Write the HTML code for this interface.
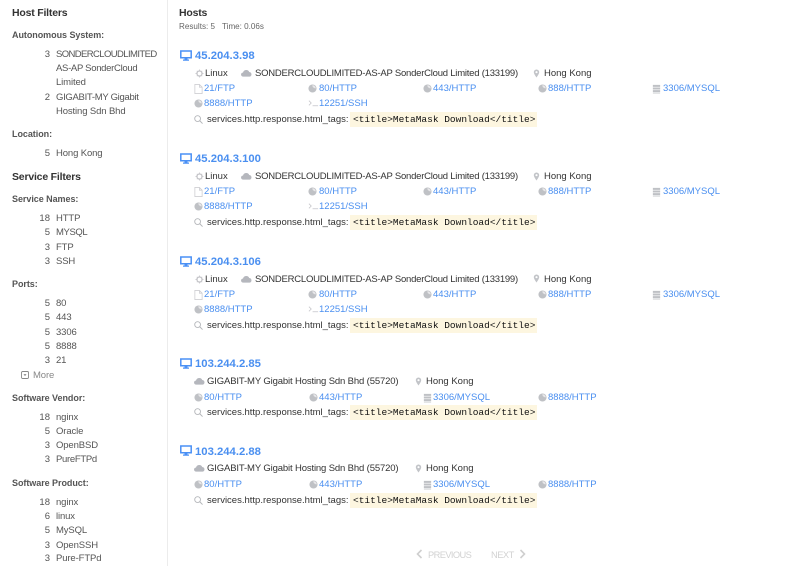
<!DOCTYPE html>
<html><head><meta charset="utf-8">
<style>
html,body{margin:0;padding:0;background:#fff}
#p{position:relative;width:800px;height:566px;overflow:hidden;font-family:"Liberation Sans",sans-serif;background:#fff;filter:blur(.3px)}
#p span,#p svg{position:absolute}
#p span{white-space:nowrap;line-height:14px;height:14px}
.bar{position:absolute;left:167px;top:0;width:1px;height:566px;background:#ececec}
.h{font-size:10.5px;font-weight:bold;color:#333;left:12px;margin-top:1px;letter-spacing:-.2px}
.s{font-size:9px;font-weight:bold;color:#555;left:12px;margin-top:1px;letter-spacing:-.05px}
.c{font-size:9.5px;color:#555;width:20px;left:30px;text-align:right;margin-top:1px}
.n{font-size:9.5px;color:#555;left:56px;margin-top:1px;letter-spacing:-.12px}
.ip{font-size:11.3px;font-weight:bold;color:#4a8ff0;left:195px}
.k{font-size:9.5px;color:#333}
.w{letter-spacing:-.226px}
.g{letter-spacing:-.14px}
.l{font-size:9.5px;color:#4a8ff0}
.m{font-family:"Liberation Mono",monospace;font-size:9.5px;color:#111;background:#fdf6e0;left:350px;width:187px;height:15px!important;line-height:15px!important;padding-left:3px;box-sizing:border-box}
.q{left:207px}
</style></head><body><div id="p">
<svg width="0" height="0" style="position:absolute">
<symbol id="mon" viewBox="0 0 12 11"><path d="M.8 1h10.400v6.800H.8z" fill="none" stroke="#4a90f5" stroke-width="1.500"/><path d="M4.500 8.500h3v1H9v1.200H3V9.500h1.500z" fill="#4a90f5"/></symbol>
<symbol id="gear" viewBox="0 0 10 10"><path d="M5 .5v9M.5 5h9M2 2l6 6M8 2l-6 6" stroke="#d0d0d4" stroke-width="1.100"/><circle cx="5" cy="5" r="2.800" fill="#fff" stroke="#c4c4c8" stroke-width="1.400"/></symbol>
<symbol id="cloud" viewBox="0 0 12 8"><path d="M2.500 8a2.300 2.300 0 0 1-.3-4.600A3.600 3.600 0 0 1 9 2.900 2.600 2.600 0 0 1 9.500 8z" fill="#b5b7bd"/></symbol>
<symbol id="pin" viewBox="0 0 7 10"><path d="M3.500 .5a3 3 0 0 1 3 3c0 2-3 6-3 6s-3-4-3-6a3 3 0 0 1 3-3z" fill="#c2c4c8"/><circle cx="3.500" cy="3.500" r="1.200" fill="#fff"/></symbol>
<symbol id="file" viewBox="0 0 9 11"><path d="M.5.5h5l3 3v7h-8zM5.500.5v3h3" fill="none" stroke="#cfcfd3" stroke-width=".9"/></symbol>
<symbol id="globe" viewBox="0 0 10 10"><circle cx="5" cy="5" r="4.500" fill="#bfc1c5"/><path d="M5 1.200c2 .2 3.500 1.600 3.600 3.500-1 .6-1.800-.4-2.600-.8C5.300 3.400 4.600 2.200 5 1.200z" fill="#e8e8ea"/></symbol>
<symbol id="db" viewBox="0 0 9 11"><path d="M.5 1h8v2.200h-8zM.5 3.900h8v2.200h-8zM.5 6.800h8V9h-8z" fill="#bfc1c5"/><path d="M.5 9.500h8v1h-8z" fill="#cdcfd2"/></symbol>
<symbol id="term" viewBox="0 0 12 8"><path d="M1 1.500 3.500 4 1 6.500" fill="none" stroke="#c8c8cc" stroke-width=".9"/><path d="M5 7h6" stroke="#c8c8cc" stroke-width=".9"/></symbol>
<symbol id="mag" viewBox="0 0 10 10"><circle cx="4" cy="4" r="3.200" fill="none" stroke="#b4b6ba" stroke-width="1"/><path d="M6.400 6.400 9.500 9.500" stroke="#b4b6ba" stroke-width="1.100"/></symbol>
<symbol id="plus" viewBox="0 0 8 8"><rect x=".5" y=".5" width="7" height="7" rx="1.200" fill="none" stroke="#888" stroke-width=".9"/><path d="M2.500 3.200h3L4 5z" fill="#777"/></symbol>
</svg>
<div class="bar"></div>

<span class="h" style="top:5px">Host Filters</span>
<span class="s" style="top:27px">Autonomous System:</span>
<span class="c" style="top:47px">3</span><span class="n" style="top:47px;letter-spacing:-.6px">SONDERCLOUDLIMITED</span>
<span class="n" style="top:61px;letter-spacing:-.3px">AS-AP SonderCloud</span>
<span class="n" style="top:75px">Limited</span>
<span class="c" style="top:90px">2</span><span class="n" style="top:90px;letter-spacing:-.3px">GIGABIT-MY Gigabit</span>
<span class="n" style="top:104px">Hosting Sdn Bhd</span>
<span class="s" style="top:126px">Location:</span>
<span class="c" style="top:146px">5</span><span class="n" style="top:146px">Hong Kong</span>
<span class="h" style="top:169px">Service Filters</span>
<span class="s" style="top:191px">Service Names:</span>
<span class="c" style="top:211px">18</span><span class="n" style="top:211px">HTTP</span>
<span class="c" style="top:225px">5</span><span class="n" style="top:225px;letter-spacing:-.4px">MYSQL</span>
<span class="c" style="top:240px">3</span><span class="n" style="top:240px">FTP</span>
<span class="c" style="top:254px">3</span><span class="n" style="top:254px">SSH</span>
<span class="s" style="top:276px">Ports:</span>
<span class="c" style="top:296px">5</span><span class="n" style="top:296px">80</span>
<span class="c" style="top:310px">5</span><span class="n" style="top:310px">443</span>
<span class="c" style="top:325px">5</span><span class="n" style="top:325px">3306</span>
<span class="c" style="top:339px">5</span><span class="n" style="top:339px">8888</span>
<span class="c" style="top:353px">3</span><span class="n" style="top:353px">21</span>
<svg style="left:21px;top:371px" width="8" height="8"><use href="#plus"/></svg>
<span class="n" style="left:33px;top:368px;color:#888">More</span>
<span class="s" style="top:390px">Software Vendor:</span>
<span class="c" style="top:410px">18</span><span class="n" style="top:410px">nginx</span>
<span class="c" style="top:424px">5</span><span class="n" style="top:424px">Oracle</span>
<span class="c" style="top:438px">3</span><span class="n" style="top:438px">OpenBSD</span>
<span class="c" style="top:452px">3</span><span class="n" style="top:452px;letter-spacing:-.3px">PureFTPd</span>
<span class="s" style="top:475px">Software Product:</span>
<span class="c" style="top:495px">18</span><span class="n" style="top:495px">nginx</span>
<span class="c" style="top:509px">6</span><span class="n" style="top:509px">linux</span>
<span class="c" style="top:523px">5</span><span class="n" style="top:523px">MySQL</span>
<span class="c" style="top:538px">3</span><span class="n" style="top:538px">OpenSSH</span>
<span class="c" style="top:551px">3</span><span class="n" style="top:551px">Pure-FTPd</span>

<span class="h" style="left:179px;top:5px">Hosts</span>
<span style="left:179px;top:20px;font-size:8.1px;color:#666">Results: 5</span>
<span style="left:222px;top:20px;font-size:8.1px;color:#666">Time: 0.06s</span>

<!-- Host 1 -->
<svg style="left:180px;top:50px" width="12" height="11"><use href="#mon"/></svg>
<span class="ip" style="top:49px">45.204.3.98</span>
<svg style="left:195px;top:69px" width="9" height="9"><use href="#gear"/></svg>
<span class="k" style="left:205px;top:67px">Linux</span>
<svg style="left:241px;top:69px" width="11" height="8"><use href="#cloud"/></svg>
<span class="k w" style="left:255px;top:67px">SONDERCLOUDLIMITED-AS-AP SonderCloud Limited (133199)</span>
<svg style="left:533px;top:69px" width="7" height="9"><use href="#pin"/></svg>
<span class="k" style="left:544px;top:67px">Hong Kong</span>
<svg style="left:194px;top:84px" width="9" height="10"><use href="#file"/></svg><span class="l" style="left:204px;top:82px">21/FTP</span>
<svg style="left:308px;top:84px" width="9" height="9"><use href="#globe"/></svg><span class="l" style="left:319px;top:82px">80/HTTP</span>
<svg style="left:423px;top:84px" width="9" height="9"><use href="#globe"/></svg><span class="l" style="left:433px;top:82px">443/HTTP</span>
<svg style="left:538px;top:84px" width="9" height="9"><use href="#globe"/></svg><span class="l" style="left:548px;top:82px">888/HTTP</span>
<svg style="left:652px;top:84px" width="9" height="10"><use href="#db"/></svg><span class="l" style="left:663px;top:82px">3306/MYSQL</span>
<svg style="left:194px;top:99px" width="9" height="9"><use href="#globe"/></svg><span class="l" style="left:204px;top:97px">8888/HTTP</span>
<svg style="left:308px;top:99px" width="11" height="8"><use href="#term"/></svg><span class="l" style="left:319px;top:97px">12251/SSH</span>
<svg style="left:194px;top:115px" width="9" height="9"><use href="#mag"/></svg>
<span class="k q" style="top:113px">services.http.response.html_tags:</span>
<span class="m" style="top:112px">&lt;title&gt;MetaMask Download&lt;/title&gt;</span>

<!-- Host 2 -->
<svg style="left:180px;top:153px" width="12" height="11"><use href="#mon"/></svg>
<span class="ip" style="top:152px">45.204.3.100</span>
<svg style="left:195px;top:172px" width="9" height="9"><use href="#gear"/></svg>
<span class="k" style="left:205px;top:170px">Linux</span>
<svg style="left:241px;top:172px" width="11" height="8"><use href="#cloud"/></svg>
<span class="k w" style="left:255px;top:170px">SONDERCLOUDLIMITED-AS-AP SonderCloud Limited (133199)</span>
<svg style="left:533px;top:172px" width="7" height="9"><use href="#pin"/></svg>
<span class="k" style="left:544px;top:170px">Hong Kong</span>
<svg style="left:194px;top:187px" width="9" height="10"><use href="#file"/></svg><span class="l" style="left:204px;top:185px">21/FTP</span>
<svg style="left:308px;top:187px" width="9" height="9"><use href="#globe"/></svg><span class="l" style="left:319px;top:185px">80/HTTP</span>
<svg style="left:423px;top:187px" width="9" height="9"><use href="#globe"/></svg><span class="l" style="left:433px;top:185px">443/HTTP</span>
<svg style="left:538px;top:187px" width="9" height="9"><use href="#globe"/></svg><span class="l" style="left:548px;top:185px">888/HTTP</span>
<svg style="left:652px;top:187px" width="9" height="10"><use href="#db"/></svg><span class="l" style="left:663px;top:185px">3306/MYSQL</span>
<svg style="left:194px;top:202px" width="9" height="9"><use href="#globe"/></svg><span class="l" style="left:204px;top:200px">8888/HTTP</span>
<svg style="left:308px;top:202px" width="11" height="8"><use href="#term"/></svg><span class="l" style="left:319px;top:200px">12251/SSH</span>
<svg style="left:194px;top:218px" width="9" height="9"><use href="#mag"/></svg>
<span class="k q" style="top:216px">services.http.response.html_tags:</span>
<span class="m" style="top:215px">&lt;title&gt;MetaMask Download&lt;/title&gt;</span>

<!-- Host 3 -->
<svg style="left:180px;top:256px" width="12" height="11"><use href="#mon"/></svg>
<span class="ip" style="top:255px">45.204.3.106</span>
<svg style="left:195px;top:275px" width="9" height="9"><use href="#gear"/></svg>
<span class="k" style="left:205px;top:273px">Linux</span>
<svg style="left:241px;top:275px" width="11" height="8"><use href="#cloud"/></svg>
<span class="k w" style="left:255px;top:273px">SONDERCLOUDLIMITED-AS-AP SonderCloud Limited (133199)</span>
<svg style="left:533px;top:274px" width="7" height="9"><use href="#pin"/></svg>
<span class="k" style="left:544px;top:273px">Hong Kong</span>
<svg style="left:194px;top:290px" width="9" height="10"><use href="#file"/></svg><span class="l" style="left:204px;top:288px">21/FTP</span>
<svg style="left:308px;top:290px" width="9" height="9"><use href="#globe"/></svg><span class="l" style="left:319px;top:288px">80/HTTP</span>
<svg style="left:423px;top:290px" width="9" height="9"><use href="#globe"/></svg><span class="l" style="left:433px;top:288px">443/HTTP</span>
<svg style="left:538px;top:290px" width="9" height="9"><use href="#globe"/></svg><span class="l" style="left:548px;top:288px">888/HTTP</span>
<svg style="left:652px;top:290px" width="9" height="10"><use href="#db"/></svg><span class="l" style="left:663px;top:288px">3306/MYSQL</span>
<svg style="left:194px;top:305px" width="9" height="9"><use href="#globe"/></svg><span class="l" style="left:204px;top:303px">8888/HTTP</span>
<svg style="left:308px;top:305px" width="11" height="8"><use href="#term"/></svg><span class="l" style="left:319px;top:303px">12251/SSH</span>
<svg style="left:194px;top:321px" width="9" height="9"><use href="#mag"/></svg>
<span class="k q" style="top:319px">services.http.response.html_tags:</span>
<span class="m" style="top:318px">&lt;title&gt;MetaMask Download&lt;/title&gt;</span>

<!-- Host 4 -->
<svg style="left:180px;top:358px" width="12" height="11"><use href="#mon"/></svg>
<span class="ip" style="top:357px">103.244.2.85</span>
<svg style="left:194px;top:377px" width="11" height="8"><use href="#cloud"/></svg>
<span class="k g" style="left:207px;top:375px">GIGABIT-MY Gigabit Hosting Sdn Bhd (55720)</span>
<svg style="left:415px;top:377px" width="7" height="9"><use href="#pin"/></svg>
<span class="k" style="left:426px;top:375px">Hong Kong</span>
<svg style="left:194px;top:393px" width="9" height="9"><use href="#globe"/></svg><span class="l" style="left:204px;top:391px">80/HTTP</span>
<svg style="left:309px;top:393px" width="9" height="9"><use href="#globe"/></svg><span class="l" style="left:319px;top:391px">443/HTTP</span>
<svg style="left:423px;top:393px" width="9" height="10"><use href="#db"/></svg><span class="l" style="left:433px;top:391px">3306/MYSQL</span>
<svg style="left:538px;top:393px" width="9" height="9"><use href="#globe"/></svg><span class="l" style="left:548px;top:391px">8888/HTTP</span>
<svg style="left:194px;top:408px" width="9" height="9"><use href="#mag"/></svg>
<span class="k q" style="top:406px">services.http.response.html_tags:</span>
<span class="m" style="top:405px">&lt;title&gt;MetaMask Download&lt;/title&gt;</span>

<!-- Host 5 -->
<svg style="left:180px;top:445px" width="12" height="11"><use href="#mon"/></svg>
<span class="ip" style="top:445px">103.244.2.88</span>
<svg style="left:194px;top:464px" width="11" height="8"><use href="#cloud"/></svg>
<span class="k g" style="left:207px;top:462px">GIGABIT-MY Gigabit Hosting Sdn Bhd (55720)</span>
<svg style="left:415px;top:464px" width="7" height="9"><use href="#pin"/></svg>
<span class="k" style="left:426px;top:462px">Hong Kong</span>
<svg style="left:194px;top:480px" width="9" height="9"><use href="#globe"/></svg><span class="l" style="left:204px;top:478px">80/HTTP</span>
<svg style="left:309px;top:480px" width="9" height="9"><use href="#globe"/></svg><span class="l" style="left:319px;top:478px">443/HTTP</span>
<svg style="left:423px;top:480px" width="9" height="10"><use href="#db"/></svg><span class="l" style="left:433px;top:478px">3306/MYSQL</span>
<svg style="left:538px;top:480px" width="9" height="9"><use href="#globe"/></svg><span class="l" style="left:548px;top:478px">8888/HTTP</span>
<svg style="left:194px;top:496px" width="9" height="9"><use href="#mag"/></svg>
<span class="k q" style="top:494px">services.http.response.html_tags:</span>
<span class="m" style="top:493px">&lt;title&gt;MetaMask Download&lt;/title&gt;</span>

<!-- Pagination -->
<svg style="left:416px;top:549px" width="7" height="10"><path d="M5.500 1 1.500 5l4 4" fill="none" stroke="#cfcfcf" stroke-width="1.600"/></svg>
<span style="left:428px;top:548px;font-size:9.3px;letter-spacing:-.6px;color:#d2d2d2">PREVIOUS</span>
<span style="left:491px;top:548px;font-size:9.3px;letter-spacing:-.5px;color:#d2d2d2">NEXT</span>
<svg style="left:519px;top:549px" width="7" height="10"><path d="M1.500 1l4 4-4 4" fill="none" stroke="#cfcfcf" stroke-width="1.600"/></svg>
</div></body></html>
